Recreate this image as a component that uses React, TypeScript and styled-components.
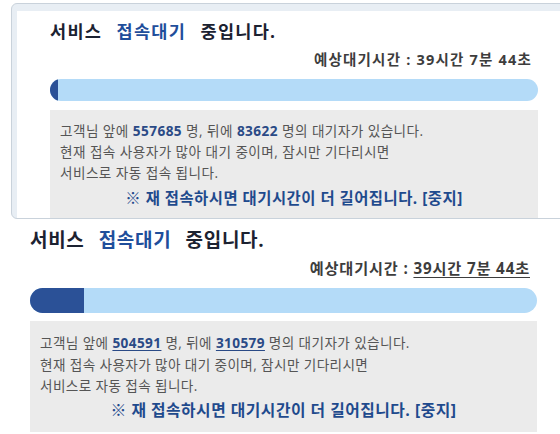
import styled, { createGlobalStyle, css } from "styled-components";

type Variant = "compact" | "wide";

type QueueState = {
  ahead: number;
  behind: number;
  eta: string;
  progress: number;
};

const GlobalStyle = createGlobalStyle`
  html, body {
    margin: 0;
    padding: 0;
    background: #fff;
    overflow: hidden;
  }
  body {
    font-family: "Open Sans", "Noto Sans CJK KR", sans-serif;
  }
`;

const Page = styled.div`
  width: 560px;
  height: 434px;
  display: flex;
  flex-direction: column;
  overflow: hidden;
`;

const Clip = styled.div<{ $height: number }>`
  height: ${(p) => p.$height}px;
  flex-shrink: 0;
  overflow: hidden;
`;

const Frame = styled.div`
  margin: 3px -40px 0 11px;
  border: 1px solid #c9d2db;
  border-radius: 6px;
  background: #e8eef4;
  padding: 7px 0 0 5px;
`;

const Panel = styled.div<{ $variant: Variant }>`
  background: #fff;
  ${(p) =>
    p.$variant === "compact"
      ? css`
          padding: 8px 0 0 33px;
        `
      : css`
          padding: 5px 0 0 30px;
        `}
`;

const Notice = styled.section<{ $variant: Variant }>`
  width: ${(p) => (p.$variant === "compact" ? 488 : 507)}px;
  display: flex;
  flex-direction: column;
`;

const Title = styled.h1<{ $variant: Variant }>`
  margin: 0;
  color: #1c2231;
  font-weight: 700;
  white-space: nowrap;
  ${(p) =>
    p.$variant === "compact"
      ? css`
          font-size: 17.5px;
          line-height: 24px;
          letter-spacing: 1.3px;
          word-spacing: 8.5px;
        `
      : css`
          font-size: 19px;
          line-height: 26px;
          letter-spacing: 0.7px;
          word-spacing: 8.5px;
        `}
`;

const Accent = styled.span`
  color: #1f4e9b;
`;

const Eta = styled.div<{ $variant: Variant }>`
  text-align: right;
  color: #3d3d3d;
  font-weight: 700;
  white-space: nowrap;
  ${(p) =>
    p.$variant === "compact"
      ? css`
          margin: 7px 6px 0 0;
          font-size: 14.5px;
          line-height: 20px;
          letter-spacing: 1.2px;
        `
      : css`
          margin: 4px 7px 0 0;
          font-size: 15.2px;
          line-height: 22px;
          letter-spacing: 0.85px;
        `}
`;

const EtaValue = styled.span<{ $underline: boolean }>`
  text-decoration: ${(p) => (p.$underline ? "underline" : "none")};
  text-underline-offset: 3px;
`;

const Track = styled.div<{ $variant: Variant }>`
  margin-top: 9px;
  height: ${(p) => (p.$variant === "compact" ? 22 : 25)}px;
  border-radius: 999px;
  background: #b4dbf8;
  overflow: hidden;
  display: flex;
`;

const Fill = styled.div`
  background: #2b5197;
  height: 100%;
`;

const InfoBox = styled.div<{ $variant: Variant }>`
  background: #ebebeb;
  color: #555;
  ${(p) =>
    p.$variant === "compact"
      ? css`
          margin-top: 9px;
          padding: 10px 10px 8px;
          font-size: 13.6px;
          line-height: 21px;
          letter-spacing: 0.45px;
        `
      : css`
          margin-top: 8px;
          padding: 11px 10px 11px;
          font-size: 13.6px;
          line-height: 21.5px;
          letter-spacing: 0.4px;
        `}
`;

const Line = styled.p`
  margin: 0;
  white-space: nowrap;
`;

const Count = styled.b<{ $underline: boolean }>`
  color: #2a4a86;
  font-weight: 700;
  text-decoration: ${(p) => (p.$underline ? "underline" : "none")};
  text-underline-offset: 2px;
`;

const Warning = styled.p<{ $variant: Variant }>`
  margin: ${(p) => (p.$variant === "compact" ? "5px" : "2px")} 0 0;
  text-align: center;
  color: #1f4a8d;
  font-weight: 700;
  line-height: 22px;
  white-space: nowrap;
  font-size: ${(p) => (p.$variant === "compact" ? 15.4 : 15.8)}px;
  letter-spacing: 0.5px;
`;

const StopLink = styled.span`
  cursor: pointer;
`;

function QueueNotice({ state, variant }: { state: QueueState; variant: Variant }) {
  const wide = variant === "wide";
  return (
    <Notice $variant={variant}>
      <Title $variant={variant}>
        서비스 <Accent>접속대기</Accent> 중입니다.
      </Title>
      <Eta $variant={variant}>
        예상대기시간 : <EtaValue $underline={wide}>{state.eta}</EtaValue>
      </Eta>
      <Track $variant={variant}>
        <Fill style={{ width: `${state.progress}%` }} />
      </Track>
      <InfoBox $variant={variant}>
        <Line>
          고객님 앞에 <Count $underline={wide}>{state.ahead}</Count> 명, 뒤에{" "}
          <Count $underline={wide}>{state.behind}</Count> 명의 대기자가 있습니다.
        </Line>
        <Line>현재 접속 사용자가 많아 대기 중이며, 잠시만 기다리시면</Line>
        <Line>서비스로 자동 접속 됩니다.</Line>
        <Warning $variant={variant}>
          ※ 재 접속하시면 대기시간이 더 길어집니다. <StopLink>[중지]</StopLink>
        </Warning>
      </InfoBox>
    </Notice>
  );
}

const earlier: QueueState = {
  ahead: 557685,
  behind: 83622,
  eta: "39시간 7분 44초",
  progress: 1.6,
};

const later: QueueState = {
  ahead: 504591,
  behind: 310579,
  eta: "39시간 7분 44초",
  progress: 10.6,
};

export default function App() {
  return (
    <Page>
      <GlobalStyle />
      <Clip $height={222}>
        <Frame>
          <Panel $variant="compact">
            <QueueNotice state={earlier} variant="compact" />
          </Panel>
        </Frame>
      </Clip>
      <Panel $variant="wide">
        <QueueNotice state={later} variant="wide" />
      </Panel>
    </Page>
  );
}
